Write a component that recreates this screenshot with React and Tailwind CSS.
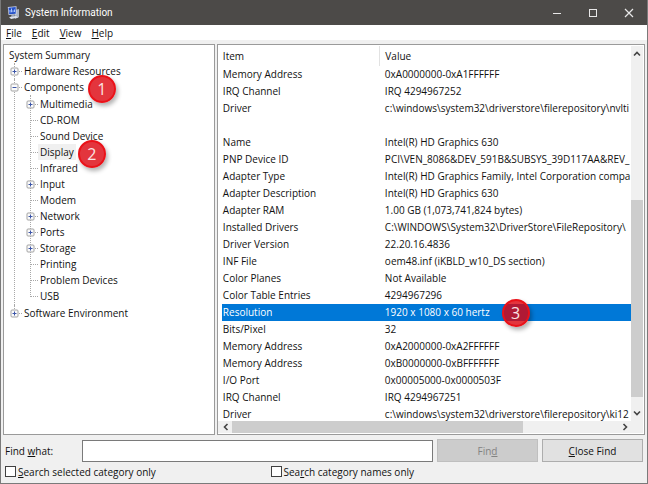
import { useState } from 'react'

const tree = [
  { label: 'System Summary', root: true },
  { label: 'Hardware Resources', expand: '+' },
  {
    label: 'Components',
    expand: '-',
    step: 1,
    children: [
      { label: 'Multimedia', expand: '+' },
      { label: 'CD-ROM' },
      { label: 'Sound Device' },
      { label: 'Display', step: 2 },
      { label: 'Infrared' },
      { label: 'Input', expand: '+' },
      { label: 'Modem' },
      { label: 'Network', expand: '+' },
      { label: 'Ports', expand: '+' },
      { label: 'Storage', expand: '+' },
      { label: 'Printing' },
      { label: 'Problem Devices' },
      { label: 'USB' },
    ],
  },
  { label: 'Software Environment', expand: '+' },
]

const rows = [
  ['Memory Address', '0xA0000000-0xA1FFFFFF'],
  ['IRQ Channel', 'IRQ 4294967252'],
  ['Driver', 'c:\\windows\\system32\\driverstore\\filerepository\\nvlti'],
  ['', ''],
  ['Name', 'Intel(R) HD Graphics 630'],
  ['PNP Device ID', 'PCI\\VEN_8086&DEV_591B&SUBSYS_39D117AA&REV_'],
  ['Adapter Type', 'Intel(R) HD Graphics Family, Intel Corporation compa'],
  ['Adapter Description', 'Intel(R) HD Graphics 630'],
  ['Adapter RAM', '1.00 GB (1,073,741,824 bytes)'],
  ['Installed Drivers', 'C:\\WINDOWS\\System32\\DriverStore\\FileRepository\\'],
  ['Driver Version', '22.20.16.4836'],
  ['INF File', 'oem48.inf (iKBLD_w10_DS section)'],
  ['Color Planes', 'Not Available'],
  ['Color Table Entries', '4294967296'],
  ['Resolution', '1920 x 1080 x 60 hertz'],
  ['Bits/Pixel', '32'],
  ['Memory Address', '0xA2000000-0xA2FFFFFF'],
  ['Memory Address', '0xB0000000-0xBFFFFFFF'],
  ['I/O Port', '0x00005000-0x0000503F'],
  ['IRQ Channel', 'IRQ 4294967251'],
  ['Driver', 'c:\\windows\\system32\\driverstore\\filerepository\\ki12'],
]

function Badge({ n, className }) {
  return (
    <span
      className={`absolute z-10 flex size-7 items-center justify-center rounded-full border-2 border-[#ea1219] bg-[#dc030c]/80 font-['Open_Sans',sans-serif] text-base text-[#fbe3e3] shadow-[2px_3px_4px_rgba(0,0,0,0.3)] ${className}`}
    >
      {n}
    </span>
  )
}

function AppIcon() {
  return (
    <svg width="14" height="14" viewBox="0 0 14 14" aria-hidden="true">
      <path d="M8 4l4-1v8l-4 2z" fill="#aab2c2" />
      <path d="M.8 1L9.500.3v8.200L1.600 9z" fill="#d4dcf0" />
      <path d="M1.500 1.700l7.200-.6v6.700l-6.500.5z" fill="#2450c8" />
      <path d="M3 6.500V4M4.500 6.300V2.500M6 6.200V4.300M7.500 6V3.500" stroke="#b9d0ff" strokeWidth=".9" />
      <path d="M4.500 9l3-.3.5 1.800-4 .5z" fill="#9aa5bb" />
      <path d="M2 11l7-1 2.500 1.400L4 13z" fill="#dde2ec" />
    </svg>
  )
}

// 9px plus / minus box in front of a branch
function Expander({ sign }) {
  return (
    <svg width="9" height="9" viewBox="0 0 9 9" className="relative shrink-0" aria-hidden="true">
      <rect x="1" y="1" width="7" height="7" rx="1" fill="#fbfbfb" stroke="#a3a3a3" />
      <path d={sign === '+' ? 'M2.500 4.500h4M4.500 2.500v4' : 'M2.500 4.500h4'} stroke="#3d56a8" />
    </svg>
  )
}

function Chevron({ d }) {
  return (
    <svg width="8" height="8" viewBox="0 0 8 8" fill="none" stroke="#444" strokeWidth="1.600" aria-hidden="true">
      <path d={d} />
    </svg>
  )
}

function TreeRow({ item, selected, onSelect }) {
  return (
    <div className="flex h-4 items-center">
      {!item.root && (
        <span className="relative flex h-4 w-3.5 shrink-0 items-center">
          <span className="absolute left-1 top-2 w-2 border-t border-dotted border-[#a8a8a8]" />
          {item.expand && <Expander sign={item.expand} />}
        </span>
      )}
      <span className="relative">
        <button
          onClick={onSelect}
          className={`block h-4 whitespace-nowrap leading-4 ${item.root ? 'px-0' : '-ml-0.5 px-0.5'} ${selected ? 'bg-[#f0f0f0]' : ''}`}
        >
          {item.label}
        </button>
        {item.step && <Badge n={item.step} className="left-full -top-1 ml-0.5" />}
      </span>
    </div>
  )
}

function Tree() {
  const [selected, setSelected] = useState('Display')
  return (
    <ul className="px-1 pt-0.5">
      {tree.map((item) => (
        <li key={item.label} className={item.root ? 'pl-px' : 'relative pl-0.5'}>
          {!item.root && (
            <span
              className={`absolute left-1.5 top-0 border-l border-dotted border-[#a8a8a8] ${item.label === 'Software Environment' ? 'h-2' : 'h-full'}`}
            />
          )}
          <TreeRow item={item} selected={selected === item.label} onSelect={() => setSelected(item.label)} />
          {item.children && (
            <ul className="relative py-px pl-4">
              <span className="absolute bottom-2 left-5 top-0 border-l border-dotted border-[#a8a8a8]" />
              {item.children.map((child) => (
                <li key={child.label}>
                  <TreeRow item={child} selected={selected === child.label} onSelect={() => setSelected(child.label)} />
                </li>
              ))}
            </ul>
          )}
        </li>
      ))}
    </ul>
  )
}

function Details() {
  return (
    <table className="w-full table-fixed border-collapse text-left">
      <thead>
        <tr className="h-5">
          <th className="w-[158px] border-r border-[#e2e2e2] p-0 pl-px font-normal">Item</th>
          <th className="p-0 pl-[5px] font-normal">Value</th>
        </tr>
      </thead>
      <tbody>
        {rows.map(([name, value], i) => (
          <tr
            key={i}
            className={`h-[17px] leading-[17px] ${name === 'Resolution' ? 'bg-[#0078d7] text-white' : ''}`}
          >
            <td className="overflow-hidden whitespace-nowrap p-0 pl-px">{name}</td>
            <td className="whitespace-nowrap p-0 pl-[5px]">
              <span className="relative">
                {value}
                {name === 'Resolution' && <Badge n={3} className="-top-1.5 left-full ml-3" />}
              </span>
            </td>
          </tr>
        ))}
      </tbody>
    </table>
  )
}

function CheckBox({ id, children }) {
  return (
    <div className="flex flex-1 items-center gap-0.5">
      <input id={id} type="checkbox" className="size-[11px] appearance-none border border-[#404040] bg-white checked:bg-[#0078d7]" />
      <label htmlFor={id}>{children}</label>
    </div>
  )
}

export default function App() {
  return (
    <main className="flex h-screen flex-col overflow-hidden border-b border-l border-r border-[#7a7a7a] bg-[#f0f0f0] font-['Open_Sans','Noto_Sans',sans-serif] text-[10px] leading-4 text-[#111]">
      {/* Title bar */}
      <header className="flex h-[25px] shrink-0 items-center bg-[#4c4a48] pl-1.5 text-white">
        <AppIcon />
        <h1 className="ml-1 flex-1 font-['Roboto',sans-serif]">System Information</h1>
        <button aria-label="Minimize" className="flex w-9 justify-center">
          <svg width="10" height="10" stroke="#e8e8e8"><path d="M1 5.500h8" /></svg>
        </button>
        <button aria-label="Maximize" className="flex w-9 justify-center">
          <svg width="10" height="10" fill="none" stroke="#e8e8e8"><rect x="1.500" y="1.500" width="7" height="7" /></svg>
        </button>
        <button aria-label="Close" className="flex w-9 justify-center">
          <svg width="10" height="10" stroke="#e8e8e8" strokeWidth="1.200"><path d="M1 1l8 8M9 1l-8 8" /></svg>
        </button>
      </header>

      <nav className="flex h-[15px] shrink-0 items-center gap-2.5 bg-white pl-[5px]">
        <button><u>F</u>ile</button>
        <button><u>E</u>dit</button>
        <button><u>V</u>iew</button>
        <button><u>H</u>elp</button>
      </nav>

      {/* Panels */}
      <div className="flex min-h-0 flex-1 gap-0.5 px-0.5 pt-1">
        <section className="w-[33%] shrink-0 overflow-hidden border border-[#9a9a9a] bg-white">
          <Tree />
        </section>

        <section className="flex min-w-0 flex-1 flex-col border border-[#9a9a9a] bg-white pb-px pl-1 pr-px pt-px">
          <div className="flex min-h-0 flex-1">
            <div className="min-w-0 flex-1 overflow-hidden">
              <Details />
            </div>
            <div className="flex w-3 shrink-0 flex-col items-center bg-[#f0f0f0]">
              <button aria-label="Scroll up" className="py-1"><Chevron d="M1 5.500l3-3 3 3" /></button>
              <div className="flex-[138]" />
              <div className="w-full flex-[198] bg-[#cdcdcd]" />
              <div className="flex-[8]" />
              <button aria-label="Scroll down" className="py-1"><Chevron d="M1 2.500l3 3 3-3" /></button>
            </div>
          </div>
          <div className="-ml-1 flex h-3 shrink-0 items-center bg-[#f0f0f0] pr-3">
            <button aria-label="Scroll left" className="pl-1 pr-0.5"><Chevron d="M5.500 1l-3 3 3 3" /></button>
            <div className="h-full flex-[289] bg-[#cdcdcd]" />
            <div className="flex-[97]" />
            <button aria-label="Scroll right" className="pr-0.5"><Chevron d="M2.500 1l3 3-3 3" /></button>
          </div>
        </section>
      </div>

      {/* Find bar */}
      <footer className="shrink-0 px-1 pb-0.5 pt-1">
        <div className="flex items-center gap-1">
          <label htmlFor="find" className="w-[73px]">Find <u>w</u>hat:</label>
          <input id="find" type="text" className="h-[22px] min-w-0 flex-1 border border-[#7a7a7a] bg-white px-1 outline-none" />
          <button disabled className="h-[23px] w-[101px] border border-[#bfbfbf] bg-[#cccccc] text-[#838383]">Fin<u>d</u></button>
          <button className="h-[23px] w-[101px] border border-[#adadad] bg-[#e1e1e1]"><u>C</u>lose Find</button>
        </div>
        <div className="flex h-[19px] items-center pr-[107px]">
          <CheckBox id="selected-only"><u>S</u>earch selected category only</CheckBox>
          <CheckBox id="names-only">Sea<u>r</u>ch category names only</CheckBox>
        </div>
      </footer>
    </main>
  )
}
